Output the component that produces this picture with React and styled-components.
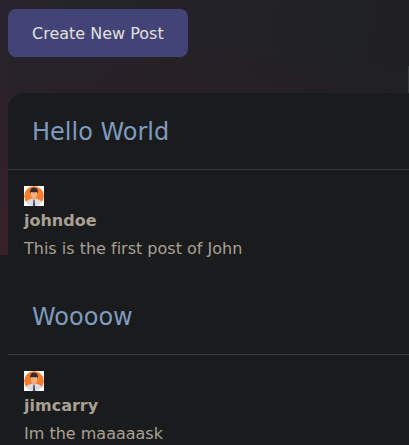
import React from 'react';
import styled, { createGlobalStyle } from 'styled-components';

const GlobalStyle = createGlobalStyle`
  html, body { margin: 0; background: #1a1b1c; overflow: hidden; }
  * { box-sizing: border-box; }
  body {
    font-family: 'DejaVu Sans', sans-serif;
    font-size: 16px;
    font-variant-ligatures: none;
    color: #a8a095;
  }
`;

const Page = styled.main`
  height: 445px;
  padding: 9px 0 0 8px;
  overflow: hidden;
  background:
    linear-gradient(#3a3b3d, #3a3b3d) 408px 66px / 1px 27px no-repeat,
    linear-gradient(180deg, rgba(53, 33, 41, 0) 50px, rgba(51, 33, 41, 0.75) 160px, #382229 255px) 0 0 / 8px 255px no-repeat,
    radial-gradient(ellipse 350px 70px at 140px 110px, rgba(43, 31, 36, 0.65), transparent) 0 0 / 100% 255px no-repeat,
    linear-gradient(100deg, #27242d 0%, #242228 40%, #202125 75%, #202024 100%) 0 0 / 100% 255px no-repeat,
    #1a1b1c;
`;

const CreateButton = styled.button`
  display: block;
  width: 180px;
  height: 48px;
  padding: 0 0 0 24px;
  border: 0;
  border-radius: 8px;
  background: #424477;
  color: #e3e0dc;
  font: inherit;
  font-variant-ligatures: none;
  text-align: left;
  white-space: nowrap;
`;

const Feed = styled.section`
  margin-top: 36px;
  height: 400px;
  border-top-left-radius: 16px;
  background: #1a1b1c;
`;

const Post = styled.article`
  height: 185px;
`;

const PostTitle = styled.h2`
  margin: 0;
  height: 77px;
  padding: 21px 24px 19px;
  border-bottom: 1px solid #393b3d;
  color: #7f9abf;
  font-size: 24px;
  font-weight: 400;
  line-height: 36px;
`;

const PostBody = styled.div`
  padding: 16px 16px 0;
`;

const AvatarSvg = styled.svg`
  display: block;
  width: 20px;
  height: 20px;
  background: #fff;
`;

const Author = styled.div`
  margin-top: 3px;
  font-weight: 700;
  line-height: 24px;
`;

const Content = styled.p`
  margin: 4px 0 0;
  line-height: 24px;
`;

const Avatar = () => (
  <AvatarSvg viewBox="0 0 20 20" aria-hidden="true">
    <defs>
      <clipPath id="disc"><circle cx="10" cy="10" r="10" /></clipPath>
    </defs>
    <g clipPath="url(#disc)">
      <circle cx="10" cy="10" r="10" fill="#fa7d2b" />
      <path d="M2 20V16.5Q2.5 14 6.5 13.2L8.5 12.3H11.5L13.5 13.2Q17.5 14 18 16.5V20Z" fill="#d9dde3" />
      <path d="M8.5 10.5H11.5V13L10 14.5L8.5 13Z" fill="#e3a577" />
      <path d="M9.4 14H10.6L11.2 20H8.9Z" fill="#41465a" />
      <ellipse cx="10" cy="7.9" rx="3.2" ry="4.2" fill="#eeb083" />
      <path d="M6.2 7.6Q5.2 1.7 10 1.4Q14.9 1.7 13.8 7.6L12.9 6Q9.5 6.5 7.1 6Z" fill="#332d30" />
    </g>
  </AvatarSvg>
);

const posts = [
  { title: 'Hello World', author: 'johndoe', content: 'This is the first post of John' },
  { title: 'Woooow', author: 'jimcarry', content: 'Im the maaaaask' },
];

export default function App() {
  return (
    <>
      <GlobalStyle />
      <Page>
        <CreateButton>Create New Post</CreateButton>
        <Feed>
          {posts.map((post) => (
            <Post key={post.author}>
              <PostTitle>{post.title}</PostTitle>
              <PostBody>
                <Avatar />
                <Author>{post.author}</Author>
                <Content>{post.content}</Content>
              </PostBody>
            </Post>
          ))}
        </Feed>
      </Page>
    </>
  );
}
